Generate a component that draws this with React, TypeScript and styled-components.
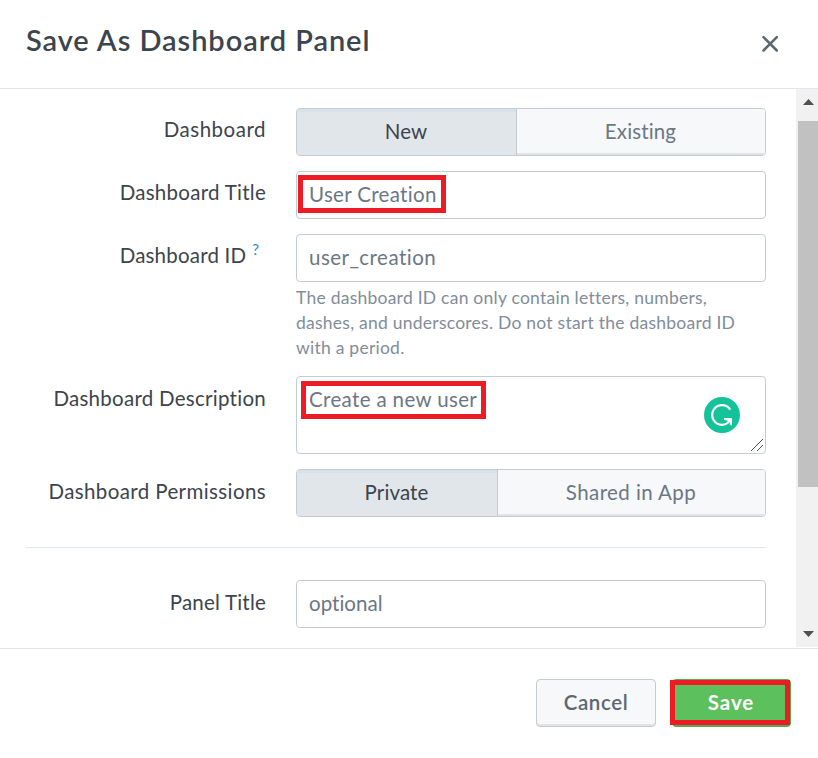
import React from 'react';
import styled, { createGlobalStyle } from 'styled-components';

const GlobalStyle = createGlobalStyle`
  *, *::before, *::after { box-sizing: border-box; }
  body {
    margin: 0;
    background: #fff;
    color: #3c444d;
    font-family: Lato, "Open Sans", sans-serif;
    font-size: 20.5px;
    font-variant-ligatures: none;
    overflow: hidden;
  }
`;

const Dialog = styled.div`
  display: flex;
  flex-direction: column;
  width: 818px;
  height: 758px;
`;

const Header = styled.header`
  display: flex;
  justify-content: space-between;
  flex: 0 0 89px;
  padding: 21px 38px 0 26px;
  border-bottom: 1px solid #e1e6eb;
`;

const Title = styled.h1`
  margin: 0;
  font-size: 29px;
  line-height: 38px;
  font-weight: 600;
  letter-spacing: 0.93px;
`;

const CloseButton = styled.button`
  width: 20px;
  height: 20px;
  margin-top: 13px;
  padding: 0;
  border: 0;
  background: none;
  svg { display: block; }
`;

const Content = styled.div`
  display: flex;
  height: 559px;
`;

const Form = styled.div`
  flex: 1;
  display: flex;
  flex-direction: column;
  gap: 15px;
  padding: 19px 30px 0 26px;
  overflow: hidden;
`;

const Row = styled.div`
  display: grid;
  grid-template-columns: 240px 470px;
  column-gap: 30px;
`;

const Label = styled.label<{ $track: number; $end?: number; $top?: number }>`
  padding-top: ${p => p.$top ?? 7}px;
  padding-right: ${p => p.$end ?? 0}px;
  text-align: right;
  line-height: 28px;
  white-space: nowrap;
  letter-spacing: ${p => p.$track}px;
`;

const HelpMark = styled.span`
  margin-left: 6px;
  color: #1e88c7;
  font-size: 15px;
  line-height: 1;
  vertical-align: 8px;
  letter-spacing: 0;
`;

const Field = styled.div<{ $track?: number }>`
  display: flex;
  align-items: center;
  height: 48px;
  padding: 0 12px 3px;
  border: 1px solid #c3cbd4;
  border-radius: 4px;
  background: #fff;
  color: #6b7785;
  letter-spacing: ${p => p.$track ?? 0.5}px;
`;

const TextArea = styled(Field)`
  position: relative;
  align-items: flex-start;
  height: 78px;
  padding-top: 8px;
  line-height: 28px;
`;

const Highlight = styled.div<{ $x: number; $y: number; $w: number; $h: number }>`
  position: absolute;
  left: ${p => p.$x}px;
  top: ${p => p.$y}px;
  width: ${p => p.$w}px;
  height: ${p => p.$h}px;
  border: 5px solid #ed1c24;
  pointer-events: none;
`;

const TitleField = styled(Field)`
  position: relative;
`;

const AssistantBadge = styled.svg`
  position: absolute;
  right: 25px;
  top: 20px;
`;

const ResizeGrip = styled.svg`
  position: absolute;
  right: 2px;
  bottom: 2px;
`;

const HelpText = styled.p`
  margin: 3px 0 1px;
  color: #818d99;
  font-size: 17.5px;
  line-height: 25px;
  letter-spacing: 0.245px;
  white-space: nowrap;
`;

const Segmented = styled.div<{ $first: number }>`
  display: grid;
  grid-template-columns: ${p => p.$first}px 1fr;
  height: 48px;
  border: 1px solid #c3cbd4;
  border-radius: 4px;
  overflow: hidden;
`;

const Segment = styled.button<{ $active?: boolean; $track: number }>`
  padding: 0 1px 2px 0;
  border: 0;
  border-right: ${p => (p.$active ? '1px solid #c3cbd4' : '0')};
  background: ${p => (p.$active ? '#e1e6ea' : '#f7f8fa')};
  box-shadow: ${p => (p.$active ? 'inset 0 3px 0 #d9e0e7' : 'inset 0 -2px 0 #e1e4e7')};
  color: ${p => (p.$active ? '#3c444d' : '#6b7785')};
  font: inherit;
  letter-spacing: ${p => p.$track}px;
`;

const Divider = styled.hr`
  width: 740px;
  height: 1px;
  margin: 15px 0 17px;
  border: 0;
  background: #e1e6ea;
`;

const Scrollbar = styled.div`
  display: flex;
  flex-direction: column;
  align-items: flex-end;
  width: 22px;
  height: 558px;
  background: #f1f1f1;
`;

const ScrollArrow = styled.div<{ $down?: boolean }>`
  display: flex;
  justify-content: center;
  width: 20px;
  height: ${p => (p.$down ? 16 : 32)}px;
  padding: ${p => (p.$down ? '0 0 0 1px' : '10px 0 0 1px')};
  svg { display: block; }
`;

const Thumb = styled.div`
  width: 20px;
  height: 366px;
  margin-bottom: auto;
  background: #c1c1c1;
`;

const Footer = styled.footer`
  display: flex;
  justify-content: flex-end;
  gap: 16px;
  flex: 1;
  padding: 30px 27px 0 0;
  border-top: 1px solid #e1e6eb;
`;

const Button = styled.button<{ $primary?: boolean }>`
  position: relative;
  width: ${p => (p.$primary ? 119 : 120)}px;
  height: 48px;
  padding: ${p => (p.$primary ? '0 7px 2px 6px' : '0 0 2px')};
  border: 1px solid ${p => (p.$primary ? '#4fae4d' : '#c3cbd4')};
  border-radius: 4px;
  background: ${p => (p.$primary ? '#5cc05c' : '#f7f8fa')};
  box-shadow: inset 0 -2px 0 ${p => (p.$primary ? '#53ad53' : '#e1e4e7')};
  color: ${p => (p.$primary ? '#fff' : '#5c6773')};
  font: inherit;
  font-weight: ${p => (p.$primary ? 700 : 600)};
  letter-spacing: ${p => (p.$primary ? 0.9 : 0.6)}px;
`;

export default function App() {
  return (
    <>
      <GlobalStyle />
      <Dialog>
        <Header>
          <Title>Save As Dashboard Panel</Title>
          <CloseButton aria-label="Close">
            <svg width="20" height="20" viewBox="0 0 20 20" fill="none" stroke="#5c6773" strokeWidth="2.5" strokeLinecap="round">
              <path d="M3.5 3.2 16.8 16.5M16.8 3.2 3.5 16.5" />
            </svg>
          </CloseButton>
        </Header>
        <Content>
          <Form>
            <Row>
              <Label $track={0.51}>Dashboard</Label>
              <Segmented $first={220}>
                <Segment $active $track={0.05}>New</Segment>
                <Segment $track={0.14}>Existing</Segment>
              </Segmented>
            </Row>
            <Row>
              <Label $track={0.27}>Dashboard Title</Label>
              <TitleField $track={0.33}>
                User Creation
                <Highlight $x={1} $y={3} $w={148} $h={38} />
              </TitleField>
            </Row>
            <Row>
              <Label $track={0.2} $end={7}>
                Dashboard ID<HelpMark>?</HelpMark>
              </Label>
              <div>
                <Field $track={0.47}>user_creation</Field>
                <HelpText>
                  The dashboard ID can only contain letters, numbers,<br />
                  dashes, and underscores. Do not start the dashboard ID<br />
                  with a period.
                </HelpText>
              </div>
            </Row>
            <Row>
              <Label $track={0.27} $top={8}>Dashboard Description</Label>
              <TextArea $track={0.36}>
                Create a new user
                <Highlight $x={4} $y={4} $w={185} $h={38} />
                <AssistantBadge width="36" height="36" viewBox="0 0 36 36" fill="none">
                  <circle cx="18" cy="18" r="18" fill="#15c39a" />
                  <path d="M26.2 12.6A9.8 9.8 0 1 0 18 27.8C21.4 27.8 24.2 26 26 23" stroke="#fff" strokeWidth="2.2" />
                  <path d="M20 21H28V28.8L25.8 27.6V24.2L20 22.8Z" fill="#fff" />
                </AssistantBadge>
                <ResizeGrip width="12" height="12" viewBox="0 0 12 12" stroke="#555" strokeWidth="1">
                  <path d="M0 12 12 0M6 12 12 6" />
                </ResizeGrip>
              </TextArea>
            </Row>
            <Row>
              <Label $track={0.39} $top={8}>Dashboard Permissions</Label>
              <Segmented $first={201}>
                <Segment $active $track={0.11}>Private</Segment>
                <Segment $track={0.42}>Shared in App</Segment>
              </Segmented>
            </Row>
            <Divider />
            <Row>
              <Label $track={0.22} $top={8}>Panel Title</Label>
              <Field $track={0.03}>optional</Field>
            </Row>
          </Form>
          <Scrollbar>
            <ScrollArrow>
              <svg width="11" height="6" viewBox="0 0 11 6" fill="#505050"><path d="M0 6 5.5 0 11 6Z" /></svg>
            </ScrollArrow>
            <Thumb />
            <ScrollArrow $down>
              <svg width="11" height="6" viewBox="0 0 11 6" fill="#505050"><path d="M0 0 5.5 6 11 0Z" /></svg>
            </ScrollArrow>
          </Scrollbar>
        </Content>
        <Footer>
          <Button>Cancel</Button>
          <Button $primary>
            Save
            <Highlight $x={-3} $y={0} $w={120} $h={45} />
          </Button>
        </Footer>
      </Dialog>
    </>
  );
}
